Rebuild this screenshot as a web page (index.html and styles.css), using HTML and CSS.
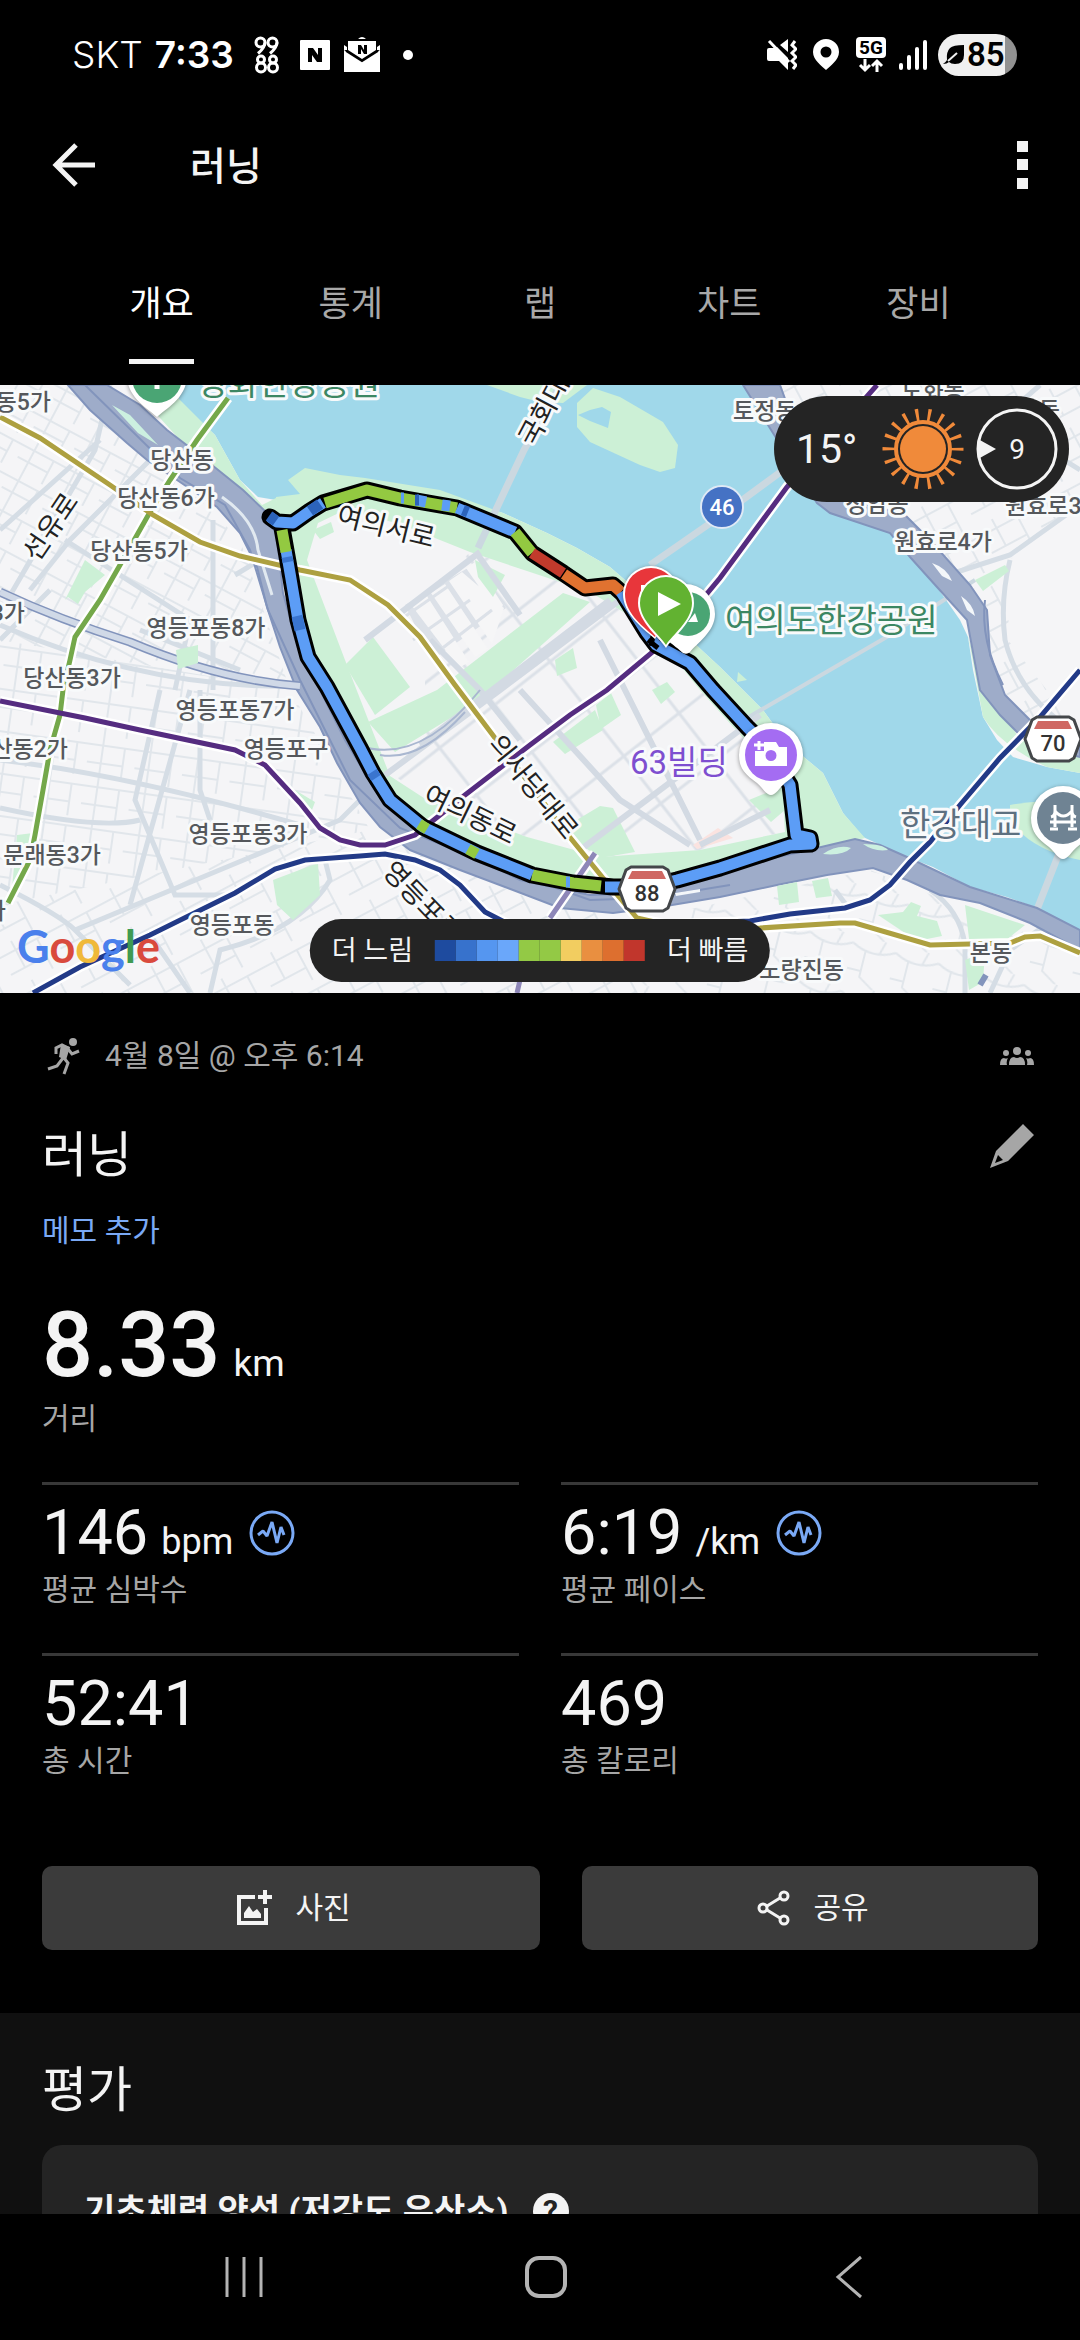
FILE: index.html
```html
<!DOCTYPE html>
<html lang="ko">
<head>
<meta charset="utf-8">
<meta name="viewport" content="width=device-width, initial-scale=1">
<title>러닝</title>
<link rel="stylesheet" href="styles.css">
</head>
<body>
<div class="screen">
  <div class="status">
    <div class="status-side">
      <span class="carrier">SKT</span>
      <span class="clock">7:33</span>
      <svg class="ic-9988" width="26" height="38" viewBox="0 0 26 38" fill="none" stroke="#fff" stroke-width="3"><circle cx="6.500" cy="6.500" r="4.500"/><circle cx="18.500" cy="6.500" r="4.500"/><path d="M11 6.500q0 5-7 11M23 6.500q0 5-7 11"/><circle cx="7" cy="23.500" r="3.500"/><circle cx="7" cy="31.500" r="4.500"/><circle cx="19" cy="23.500" r="3.500"/><circle cx="19" cy="31.500" r="4.500"/></svg>
      <svg class="ic-n" width="32" height="32" viewBox="0 0 32 32"><rect x="1" y="1" width="30" height="30" rx="1" fill="#fff"/><path d="M9 23V9h5l5 7V9h4v14h-5l-5-7v7z" fill="#000"/></svg>
      <svg class="ic-mail" width="36" height="38" viewBox="0 0 36 38"><path d="M14 3q4-4 8 0zM4 5h28v9L18 23 4 14z" fill="#fff"/><path d="M0 14l18 11 18-11v22H0z" fill="#fff"/><path d="M0 14V9l3 2v3zM36 14V9l-3 2v3z" fill="#fff"/><path d="M2 15l16 10 16-10" fill="none" stroke="#000" stroke-width="2"/><path d="M14 18V9h3l3 5V9h3v9h-3l-3-5v5z" fill="#000"/></svg>
      <i class="more-dot"></i>
    </div>
    <div class="status-side">
      <svg width="30" height="32" viewBox="0 0 30 32"><path d="M0 11q0-2 2-2h5l3-1 11 11v12l-9-9H2q-2 0-2-2zM13 6l8-6v13z" fill="#fff"/><path d="M2 2l20 21M28 2l-3 4 4 4-4 4 4 4-4 4 4 4-3 4" fill="none" stroke="#fff" stroke-width="3"/></svg>
      <svg class="ic-pin" width="26" height="32" viewBox="0 0 26 32"><path fill-rule="evenodd" d="M13 0a13 13 0 0 1 13 13c0 8-9 14-13 18C9 27 0 21 0 13A13 13 0 0 1 13 0zm0 7.500a5.500 5.500 0 1 0 0 11 5.500 5.500 0 0 0 0-11z" fill="#fff"/></svg>
      <svg class="ic-5g" width="32" height="36" viewBox="0 0 32 36"><rect x="1" y="0" width="30" height="21" rx="4" fill="#fff"/><text x="16" y="17" text-anchor="middle" class="t-5g">5G</text><path d="M10 22v11M5 28l5 5 5-5M22 35V24M17 29l5-5 5 5" fill="none" stroke="#fff" stroke-width="3"/></svg>
      <svg class="ic-sig" width="28" height="30" viewBox="0 0 28 30" stroke="#fff" stroke-width="4" stroke-linecap="round"><path d="M2 25v3M10 17v11M18 9v19M26 2v26"/></svg>
      <span class="battery"><svg width="22" height="22" viewBox="0 0 22 22"><path d="M21 1v10q0 9-9 9-4 0-6-2-2 2-6 2 3-2 4-4-1-8 3-12 3-3 14-3z" fill="#000"/><path d="M5 17l9-8" stroke="#f0f0f0" stroke-width="2"/></svg>85</span>
    </div>
  </div>

  <header class="appbar">
    <button class="icon-btn" aria-label="뒤로"><svg width="44" height="44" viewBox="0 0 44 44" fill="none" stroke="#f4f4f4" stroke-width="5"><path d="M43 22H4M24 2L4 22l20 20"/></svg></button>
    <h1>러닝</h1>
    <button class="icon-btn" aria-label="더보기"><svg width="12" height="48" viewBox="0 0 12 48" fill="#f4f4f4"><path d="M0 0h11v11H0zM0 18h11v11H0zM0 37h11v11H0z"/></svg></button>
  </header>

  <nav class="tabs">
    <button class="tab on"><span>개요</span></button>
    <button class="tab"><span>통계</span></button>
    <button class="tab"><span>랩</span></button>
    <button class="tab"><span>차트</span></button>
    <button class="tab"><span>장비</span></button>
  </nav>

  <main class="content">
    <section class="map">
      <svg class="map-art" viewBox="0 385 1080 608">
        <defs>
          <pattern id="gA" width="46" height="34" patternUnits="userSpaceOnUse" patternTransform="rotate(28)"><path d="M0 8H46M0 21H34M12 0V34M34 8V34" class="street"/></pattern>
          <pattern id="gB" width="48" height="42" patternUnits="userSpaceOnUse" patternTransform="rotate(8)"><path d="M0 10H48M14 0V42M0 28H36M36 10V42" class="street"/></pattern>
          <pattern id="gC" width="56" height="44" patternUnits="userSpaceOnUse" patternTransform="rotate(-28)"><path d="M0 10H56M0 30H40M16 0V30M40 10V44" class="street"/></pattern>
          <pattern id="gD" width="70" height="60" patternUnits="userSpaceOnUse" patternTransform="rotate(-38)"><path d="M0 20H70M26 0V60" class="block"/></pattern>
          <pattern id="gE" width="44" height="50" patternUnits="userSpaceOnUse" patternTransform="rotate(14)"><path d="M0 8Q22 20 44 8M14 12V40L30 50M32 0L28 14M0 34H14" class="street"/></pattern>
        </defs>
        <rect x="0" y="385" width="1080" height="608" fill="#f5f5f7"/>

        <!-- street grids by district -->
        <path d="M0 385H85L240 540 290 690 0 640z" fill="url(#gA)"/>
        <path d="M0 640L290 690 370 830 0 905z" fill="url(#gB)"/>
        <path d="M0 905L370 830 520 895 640 920V993H0z" fill="url(#gC)"/>
        <path d="M640 920L870 870 1080 955V993H640z" fill="url(#gE)"/>
        <path d="M745 385H1080V500L1010 560 960 600z" fill="url(#gC)"/>
        <path d="M975 600L1010 570 1008 640 1070 720H1030L1000 690z" fill="url(#gC)"/>
        <g class="road">
          <path d="M110 385L95 450 12 592M0 625Q150 690 300 686M30 590L70 540 170 440 75 385M0 530L100 440M65 540L190 620 175 690M213 520V690M190 690L130 905M0 760Q130 775 300 825M0 808Q100 830 140 820M160 690L135 800 175 895 235 895M0 885Q60 915 75 930L340 820 380 780M75 930L130 985M150 935L190 993M325 860L330 880Q300 930 220 950L210 993M200 690V790L210 820"/>
          <path d="M140 630L240 670M0 640L50 590M235 575L260 560"/>
          <path d="M870 600L1010 555 1080 505M1010 560Q1000 600 1005 640 1020 700 1080 735M1040 385L1000 420 1080 470M905 520L960 600"/>
          <path d="M835 890L850 910M930 890Q960 910 965 945V993M1060 915L1010 950 990 993"/>
        </g>

        <!-- river -->
        <path d="M185 385L178 400 215 435 240 480 258 497 276 500 300 500 360 480 430 490 503 513 547 533 577 548 610 567 640 593 720 667 763 710 787 743 823 773 843 813 863 837 907 857 933 867 970 887 1007 897 1037 908 1080 930V773L1047 767 1013 757 997 740 983 717 973 670 968 637 960 620 937 587 910 557 890 533 830 513 817 503 773 433 743 385z" fill="#a0d8ea"/>
        <g fill="#ccf0d6">
          <path d="M140 385H165L195 415 215 435 240 480 262 505 276 498 290 560 255 500 180 440 130 385z"/>
          <path d="M276 500V497L300 494 288 480 305 468 340 475 365 478 440 490 503 513 547 533 577 548 610 567 640 593 720 667 763 710 787 743 823 773 843 813 865 838 800 855 640 893 520 880 420 830 375 790 327 700 297 620 280 520z"/>
          <path d="M577 403L593 388 620 397 663 422 678 445 675 468 660 472 640 465 590 442 577 427z"/>
          <path d="M487 385L520 397 540 402 563 403 587 385z"/>
          <path d="M968 635Q978 690 983 717 1000 745 1047 767L1080 773V745L1020 740 990 690 972 650z"/>
          <path d="M1010 805Q1040 800 1080 800V860Q1030 850 1010 820z"/>
          <path d="M738 672l9 8-10 2z"/>
        </g>
        <path d="M590 410L602 407 611 412 608 428 590 421 578 415z" fill="#a0d8ea"/>

        <!-- bridges -->
        <g fill="none" stroke="#cbd8e0" stroke-width="7"><path d="M478 548L524 450 560 385M650 565L722 515 790 465M1080 800L1036 912" /></g>
        <path d="M735 725L885 638 975 580" fill="none" stroke="#cbd8e0" stroke-width="4"/>

        <!-- island blocks -->
        <path d="M307 560L318 523 345 510 400 524 470 552 530 572 590 592 650 628 700 690 745 740 783 800 785 832 700 850 600 857 527 837 427 800 390 776 345 660z" fill="#f4f4f6"/>
        <path d="M425 600L470 552 530 572 590 592 650 628 700 690 745 740 783 800 785 832 700 850 600 857 527 837 427 800 395 776 425 740z" fill="url(#gD)"/>
        <path d="M478 562L506 608 432 660 405 605z" fill="#dce1e8"/>
        <path d="M412 606l15-10 42 66-10 6zM431 593l14-9 43 65-13 8zM449 581l13-9 42 36-12 36zM466 568l9-6 28 43-5 9z" fill="#f6f6f7"/>
        <path d="M413 640L470 600M400 620L450 585M440 650L492 610" stroke="#dce1e8" stroke-width="3"/>
        <g fill="#ccf0d6">
          <path d="M368 722L437 690 563 593 590 602 480 700 395 752z"/>
          <path d="M345 665L373 637 410 687 375 715z"/>
          <path d="M313 530l18-8 3 10-14 7zM475 560l30 15-12 22-15-20z"/>
          <path d="M553 742l42-32 8 20-38 24zM596 705l15-12 10 22-20 14zM555 660l18-12 4 20-20 8z"/>
          <path d="M560 830L600 806 613 808 635 852 600 858zM749 800l34-14 2 24-14 12z"/>
          <path d="M652 690l15-8 8 10-14 12z"/>
        </g>
        <path d="M693 845L718 828 733 838 697 849z" fill="#fbe3e0"/>
        <g class="artery"><path d="M365 640L480 552M478 555L520 615M420 745L610 600M520 740L480 690 430 640M600 640L700 840M520 690L620 800 690 845M580 850L760 715M385 775L500 690 620 600M700 845L770 810"/></g>

        <!-- expressways -->
        <g fill="#9eacc9" stroke="#8294bc" stroke-width="2">
          <path d="M68 385L90 410 127 443 147 460 177 480 217 507 240 533 257 567 267 607 280 647 297 690 320 727 337 763 360 803 380 827 410 850 460 870 513 890 560 908 613 913 660 907 720 897 777 885 827 875 873 868 907 880 940 895 980 903 1030 923 1080 950V930L1037 908 970 887 907 857 880 845 855 839 800 852 720 870 640 893 590 895 520 880 420 830 375 790 345 740 320 690 297 643 283 593 277 537 267 513 243 490 197 453 167 430 140 405 107 385z"/>
          <path d="M743 385L773 433 817 503 830 513 890 533 910 557 937 587 967 620 980 690 1000 715 1030 745 1080 757V735L1035 725 1005 695 990 655 987 610 970 585 930 540 905 515 850 500 800 440 780 385z"/>
        </g>
        <path d="M1003 685Q980 640 985 600" fill="none" stroke="#8294bc" stroke-width="2"/>
        <path d="M0 592Q60 620 130 642 220 680 300 686" fill="none" stroke="#8294bc" stroke-width="9"/>
        <path d="M0 592Q60 620 130 642 220 680 300 686" fill="none" stroke="#d0d9e7" stroke-width="6"/>
        <path d="M85 385L180 478 225 505 250 550 268 610 300 680 350 780 400 828 500 868 590 900 650 898 730 885" fill="none" stroke="#8294bc" stroke-width="2"/>
        <path d="M222 497Q255 520 258 550L272 595" fill="none" stroke="#e1e9f0" stroke-width="3"/>
        <g fill="#ccf0e0"><path d="M112 405l18 10 28 30-20-12zM823 854q15-10 28-6-8 8-28 6zM863 844q20 0 25 6-14 2-25-6z"/></g>
        <g fill="#f4f7fa"><path d="M932 563q15 5 20 18l-10-5zM961 596q12 8 14 20l-8-6zM675 893l25-4v3l-24 4z"/></g>
        <path d="M360 746Q420 765 480 690M380 755Q420 762 465 712" fill="none" stroke="#a9b7d0" stroke-width="2"/>

        <!-- southern and northern parks -->
        <g fill="#ccf0d6">
          <path d="M273 880L318 863 320 895 293 920 277 905z"/>
          <path d="M65 600L85 560 105 575 85 592 78 604 68 597zM176 650l22-5v18l-20 6zM17 835l16-2-15 45-6 10zM295 790l20 12-3 8-18-12z"/>
          <path d="M777 886l20-4 2 20-20 3zM812 881l16-3 4 18-16 2zM878 915l25-3 8-10 10 4-4 10 20 5 5 15-25 5zM965 905l60 20-25 20-30 2zM965 960l20-8-2 30-14 8zM975 580l30-15 4 6-26 20z"/>
        </g>
        <path d="M980 985l6-10" stroke="#8294bc" stroke-width="6"/>

        <!-- transit lines -->
        <g class="casing">
          <path d="M228 398L197 440 170 480 150 512 137 535 120 565 100 600 75 637 70 660 63 690 60 715 50 750 43 790 35 835 30 860 8 903"/>
          <path d="M0 417L40 438 110 485 153 515 200 542 240 556 300 570 350 580 388 605 420 637 455 685 495 738 568 835 603 878 637 918 690 930 760 928 840 923 855 923 930 945 1010 943 1025 937 1040 936 1080 953"/>
          <path d="M0 701L85 718 140 730 235 750 265 765 300 803 320 828 340 840 360 845 385 845 415 835 440 815 465 795 500 768 530 745 570 715 607 690 655 650 685 620 720 578 787 487 877 385"/>
          <path d="M33 993L80 967 150 935 235 893 275 869 305 860 360 856 385 854 415 860 440 870 460 885 485 912 520 930 750 921 790 914 845 908 870 900 890 885 910 862 930 842 960 805 1000 758 1040 717 1080 670"/>
          <path d="M595 853L550 918"/>
        </g>
        <g class="line">
          <path stroke="#74a84a" d="M228 398L197 440 170 480 150 512 137 535 120 565 100 600 75 637 70 660 63 690 60 715 50 750 43 790 35 835 30 860 8 903"/>
          <path stroke="#ada040" d="M0 417L40 438 110 485 153 515 200 542 240 556 300 570 350 580 388 605 420 637 455 685 495 738 568 835 603 878 637 918 690 930 760 928 840 923 855 923 930 945 1010 943 1025 937 1040 936 1080 953"/>
          <path stroke="#552c80" d="M0 701L85 718 140 730 235 750 265 765 300 803 320 828 340 840 360 845 385 845 415 835 440 815 465 795 500 768 530 745 570 715 607 690 655 650 685 620 720 578 787 487 877 385"/>
          <path stroke="#223a87" d="M33 993L80 967 150 935 235 893 275 869 305 860 360 856 385 854 415 860 440 870 460 885 485 912 520 930 750 921 790 914 845 908 870 900 890 885 910 862 930 842 960 805 1000 758 1040 717 1080 670"/>
          <path stroke="#8e87b8" d="M595 853L550 918M523 967L517 993"/>
        </g>

        <!-- run route, coloured by pace -->
        <path class="route-edge" d="M270 517L277 522 293 523 310 511 323 503 367 490 400 498 457 508 515 532 532 553 563 573 585 588 613 585 623 594 647 633 656 645 690 663 713 690 747 727 765 745 790 785 796 835 810 838 811 844 790 845 720 868 677 880 647 887 613 887 573 883 532 875 477 853 423 827 390 800 373 773 360 748 327 687 308 657 298 620 290 573 282 528"/>
        <g class="route">
          <path stroke="#5c9df6" d="M270 517L277 522 293 523 310 511 323 503"/>
          <path stroke="#2c63bb" d="M269 516L276 521M310 511L320 504"/>
          <path stroke="#93c941" d="M325 503L367 490 400 498 457 508"/>
          <path stroke="#5c9df6" d="M416 500L426 502M442 505L450 506M457 508L515 532M401 498h3"/>
          <path stroke="#2c63bb" d="M415 500h4M463 510l5 2"/>
          <path stroke="#93c941" d="M515 532L532 553"/>
          <path stroke="#c23a2c" d="M532 553L563 573"/>
          <path stroke="#e07230" d="M564 574L585 588 613 585 621 592"/>
          <path stroke="#5c9df6" d="M621 592L647 633 656 645 690 663 713 690 747 727 765 745 790 785 796 835 810 838 811 844 790 845 720 868 677 880 647 887 605 887"/>
          <path stroke="#93c941" d="M601 886L573 883 532 875"/>
          <path stroke="#5c9df6" d="M570 882h-4M532 875L477 853 423 827 390 800 373 773 360 748 327 687 308 657 298 620 290 573 286 550"/>
          <path stroke="#93c941" d="M477 854L468 849M427 829L419 824M286 552L282 530"/>
          <path stroke="#3a75cf" d="M376 778l-4-6M300 630l-3-14M287 557l1 5"/>
        </g>
        <path d="M648 640l10 8M653 636l-2 10" stroke="#000" stroke-width="5"/>

        <!-- road numbers -->
        <circle cx="722" cy="507" r="21" fill="#4572c4" stroke="#dfe9f5" stroke-width="2"/>
        <text class="num" x="722" y="515" fill="#fff">46</text>
        <path class="shield" d="M631 867H663L668 870 675 889 668 908 663 911H631L626 908 619 889 626 870z"/>
        <path d="M632 871H662L666 879H628z" fill="#cf6863"/>
        <text class="num" x="647" y="901" fill="#333">88</text>
        <path class="shield" d="M1037 717H1069L1074 720 1081 739 1074 758 1069 761H1037L1032 758 1025 739 1032 720z"/>
        <path d="M1038 721H1068L1072 729H1034z" fill="#cf6863"/>
        <text class="num" x="1053" y="751" fill="#333">70</text>

        <!-- place names -->
        <g class="dong">
          <text x="182" y="468">당산동</text>
          <text x="166" y="506">당산동6가</text>
          <text x="139" y="559">당산동5가</text>
          <text x="206" y="636">영등포동8가</text>
          <text x="72" y="686">당산동3가</text>
          <text x="235" y="718">영등포동7가</text>
          <text x="286" y="757">영등포구</text>
          <text x="248" y="842">영등포동3가</text>
          <text x="232" y="933">영등포동</text>
          <text x="991" y="961">본동</text>
          <text x="933" y="399">도화동</text>
          <text x="877" y="512">청암동</text>
          <text x="943" y="550">원효로4가</text>
        </g>
        <g class="dong end">
          <text x="51" y="410">양평동5가</text>
          <text x="25" y="621">양평동3가</text>
          <text x="68" y="757">당산동2가</text>
          <text x="101" y="863">문래동3가</text>
          <text x="6" y="919">가</text>
          <text x="844" y="978">노량진동</text>
          <text x="1060" y="418">용문동</text>
        </g>
        <g class="dong start">
          <text x="733" y="419">토정동</text>
          <text x="1005" y="514">원효로3가</text>
        </g>
        <g class="way">
          <text transform="translate(51 527) rotate(-56)" y="9">선유로</text>
          <text transform="translate(386 527) rotate(14)" y="9">여의서로</text>
          <text transform="translate(470 815) rotate(26)" y="9">여의동로</text>
          <text transform="translate(533 787) rotate(51)" y="9">의사당대로</text>
          <text transform="translate(422 902) rotate(46)" y="9">영등포로</text>
          <text transform="translate(550 400) rotate(-62)" y="9">국회대로</text>
        </g>
        <g class="poi">
          <text x="198" y="395" fill="#3c8763">양화한강공원</text>
          <text x="725" y="632" fill="#3c8763">여의도한강공원</text>
          <text x="630" y="774" fill="#7e4fd0">63빌딩</text>
          <text x="900" y="836" fill="#5d7080">한강대교</text>
        </g>

        <!-- pins -->
        <g class="pin">
          <path fill="#fff" d="M157 417C150 410 127 398 127 376H187C187 398 164 410 157 417z"/><circle cx="157" cy="378" r="25" fill="#4aa574"/><path d="M157 380v9" stroke="#fff" stroke-width="5"/>
          <path fill="#fff" d="M683 653C676 646 655 635 655 614A30 30 0 0 1 715 614C715 632 696 644 690 652Q687 655 683 653z"/><circle cx="688" cy="614" r="22" fill="#4aa574"/><path d="M688 622l7-9 3 9z" fill="#fff"/>
          <path fill="#fff" d="M655 639C640 626 623 613 623 594A28 28 0 0 1 679 594z"/><path fill="#e8363b" d="M655 637C640 624 625 612 625 594A26 26 0 0 1 677 594z"/><path d="M641 585h6v6h-6z" fill="#fff"/>
          <path fill="#fff" d="M666 648C660 638 638 622 638 603A28 28 0 0 1 694 603C694 622 672 638 666 648z"/><path fill="#62b231" d="M666 645C660 635 640 621 640 603A26 26 0 0 1 692 603C692 621 672 635 666 645z"/><path d="M658 592L681 604 658 616z" fill="#fff"/>
          <path fill="#fff" d="M771 795C766 795 763 788 757 783 746 775 739 769 739 755A32 32 0 0 1 803 755C803 769 796 775 785 783 779 788 776 795 771 795z"/><circle cx="771" cy="755" r="26" fill="#a46cf2"/>
          <path fill="#fff" fill-rule="evenodd" d="M755 766V751H764V742H776L779 747H787V766zM771 750a5.500 5.500 0 1 0 0 11 5.500 5.500 0 0 0 0-11z"/><path d="M759 741v9M754 745h10" stroke="#fff" stroke-width="3"/>
          <path fill="#fff" d="M1063 859C1058 859 1055 852 1049 847 1038 839 1031 832 1031 818A32 32 0 0 1 1095 818C1095 832 1088 839 1077 847 1071 852 1068 859 1063 859z"/><circle cx="1063" cy="818" r="26" fill="#6f8393"/>
          <path d="M1055 805v22M1072 805v22M1050 822h26M1050 829h8M1068 829h9M1051 817q4-1 4-6 8 10 17 0 0 5 4 6" fill="none" stroke="#fff" stroke-width="3"/>
        </g>
        <text class="google" x="17" y="963"><tspan fill="#4a80ec">G</tspan><tspan fill="#d94a3d">o</tspan><tspan fill="#f0b93a">o</tspan><tspan fill="#4a80ec">g</tspan><tspan fill="#3f9a52">l</tspan><tspan fill="#d94a3d">e</tspan></text>
      </svg>

      <div class="weather">
        <span class="temp">15°</span>
        <svg width="82" height="82" viewBox="-41 -41 82 82"><circle r="23" fill="#f08a3a"/><circle r="27" fill="none" stroke="#f08a3a" stroke-width="4"/><circle r="34" fill="none" stroke="#f08a3a" stroke-width="13" stroke-dasharray="3 8.868" stroke-dashoffset="1.500"/></svg>
        <svg width="82" height="82" viewBox="-41 -41 82 82"><circle r="39" fill="none" stroke="#f4f4f4" stroke-width="3"/><path d="M-39-10L-21 0-39 10z" fill="#f4f4f4"/><text class="wind" y="10">9</text></svg>
      </div>

      <div class="legend">
        <span>더 느림</span>
        <div class="scale"><i class="c1"></i><i class="c2"></i><i class="c3"></i><i class="c4"></i><i class="c5"></i><i class="c5"></i><i class="c6"></i><i class="c7"></i><i class="c8"></i><i class="c9"></i></div>
        <span>더 빠름</span>
      </div>
    </section>

    <section class="summary">
      <div class="meta">
        <svg width="38" height="38" viewBox="0 0 38 38"><circle cx="31" cy="5" r="4" fill="#a6a6a6"/><path d="M14 17V11L20 8L26 11L22 21L26 26L22 37M21 21L15 29L6 32M26 12L30 17L37 14" fill="none" stroke="#a6a6a6" stroke-width="3"/><path d="M19 7L28 10L24 23L17 20z" fill="#a6a6a6"/></svg>
        <span>4월 8일 @ 오후 6:14</span>
        <svg class="people" width="34" height="20" viewBox="0 0 34 20" fill="#a6a6a6"><circle cx="17" cy="5" r="4"/><circle cx="6" cy="7" r="3"/><circle cx="28" cy="7" r="3"/><path d="M9 19q0-8 5-8 3 2 6 0 5 0 5 8zM0 19q0-7 4-7 2 1 4 0-2 3-1 7zM34 19q0-7-4-7-2 1-4 0 2 3 1 7z"/></svg>
      </div>
      <div class="title-row">
        <h2>러닝</h2>
        <button class="icon-btn" aria-label="이름 편집"><svg width="44" height="44" viewBox="0 0 44 44"><path fill-rule="evenodd" d="M33 0L44 11 18 37 0 44 6 27zM8 31L5 39 13 36z" fill="#a6a6a6"/></svg></button>
      </div>
      <a class="memo" href="#">메모 추가</a>

      <div class="distance"><b>8.33</b><span>km</span></div>
      <p class="label">거리</p>

      <div class="stats">
        <div class="stat">
          <div class="value">146 <small>bpm</small><svg width="46" height="46" viewBox="0 0 46 46" fill="none" stroke="#7aa9f5" stroke-width="3"><circle cx="23" cy="23" r="21"/><path d="M9 25l5-4 4 5 5-14 5 21 4-16 3 8" stroke-linejoin="bevel"/></svg></div>
          <p class="label">평균 심박수</p>
        </div>
        <div class="stat">
          <div class="value">6:19 <small>/km</small><svg width="46" height="46" viewBox="0 0 46 46" fill="none" stroke="#7aa9f5" stroke-width="3"><circle cx="23" cy="23" r="21"/><path d="M9 25l5-4 4 5 5-14 5 21 4-16 3 8" stroke-linejoin="bevel"/></svg></div>
          <p class="label">평균 페이스</p>
        </div>
        <div class="stat">
          <div class="value">52:41</div>
          <p class="label">총 시간</p>
        </div>
        <div class="stat">
          <div class="value">469</div>
          <p class="label">총 칼로리</p>
        </div>
      </div>

      <div class="actions">
        <button class="action"><svg width="36" height="36" viewBox="0 0 36 36"><path d="M18 7H2V33H29V18M28 0V14M21 7H35" fill="none" stroke="#f4f4f4" stroke-width="4"/><path d="M7 28V23L12 16 16 22 20 19 24 24V28z" fill="#f4f4f4"/></svg>사진</button>
        <button class="action"><svg width="34" height="36" viewBox="0 0 34 36" fill="none" stroke="#f4f4f4" stroke-width="3"><circle cx="6" cy="18" r="4"/><circle cx="27" cy="6" r="4"/><circle cx="27" cy="30" r="4"/><path d="M10 16L23 8M10 20L23 28"/></svg>공유</button>
      </div>
    </section>

    <section class="rating">
      <h2>평가</h2>
      <div class="card">
        <h3>기초체력 양성 (저강도 유산소)</h3>
        <button class="help" aria-label="도움말">?</button>
      </div>
    </section>
  </main>

  <footer class="sysnav">
    <button aria-label="최근 앱"><svg width="42" height="44" viewBox="0 0 42 44" stroke="#b4b4b4" stroke-width="3"><path d="M4 2V42M21 2V42M38 2V42"/></svg></button>
    <button aria-label="홈"><svg width="44" height="44" viewBox="0 0 44 44"><rect x="3" y="3" width="38" height="38" rx="12" fill="none" stroke="#b4b4b4" stroke-width="4"/></svg></button>
    <button aria-label="뒤로"><svg width="28" height="44" viewBox="0 0 28 44" fill="none" stroke="#b4b4b4" stroke-width="3"><path d="M26 2L3 22 26 42"/></svg></button>
  </footer>
</div>
</body>
</html>
```
FILE: styles.css
```css
* { box-sizing: border-box; margin: 0; padding: 0; }
body { background: #000; color: #f4f4f4; font-family: Roboto, "Noto Sans CJK KR", sans-serif; }
button { background: none; border: 0; color: inherit; font: inherit; }
svg { display: block; flex: none; }

.screen { height: 100vh; display: flex; flex-direction: column; overflow: hidden; }

/* system status bar */
.status { flex: none; height: 110px; padding: 0 63px 0 72px; display: flex; align-items: center; justify-content: space-between; color: #fff; }
.status-side { display: flex; align-items: center; }
.carrier, .clock { font-family: Inter, sans-serif; font-size: 37px; line-height: 48px; font-weight: 300; }
.clock { font-weight: 600; margin: 0 20px 0 12px; }
.ic-n { margin: 0 13px 0 19px; }
.more-dot { width: 10px; height: 10px; border-radius: 50%; background: #fff; margin-left: 23px; }
.ic-pin { margin: 0 16px; }
.ic-sig { margin: 0 11px 0 12px; }
.t-5g { font: 700 19px Roboto, sans-serif; fill: #000; }
.battery { width: 79px; height: 42px; border-radius: 21px; padding-left: 5px; display: flex; align-items: center; gap: 2px; background: linear-gradient(90deg, #f0f0f0 67px, #929292 67px); color: #000; font: 600 33px/42px Roboto, sans-serif; }

/* app bar */
.appbar { flex: none; height: 110px; padding: 0 51px 0 52px; display: flex; align-items: center; gap: 94px; }
.appbar h1 { flex: 1; padding-top: 4px; font-size: 39px; line-height: 56px; font-weight: 500; }

.tabs { flex: none; height: 165px; padding: 0 67px 21px; display: flex; }
.tab { flex: 1; display: flex; justify-content: center; color: #a8a8a8; font-size: 35px; line-height: 48px; }
.tab span { height: 144px; padding-top: 61px; border-bottom: 5px solid transparent; }
.tab.on { color: #fff; }
.tab.on span { border-color: #f4f4f4; }

.content { flex: 1; min-height: 0; overflow-y: auto; scrollbar-width: none; }

/* map */
.map { position: relative; background: #f5f5f7; }
.map-art { width: 100%; height: auto; }
.street { fill: none; stroke: #e1e6eb; stroke-width: 2; }
.block { fill: none; stroke: #dce1e8; stroke-width: 3; }
.road { fill: none; stroke: #d5dde5; stroke-width: 5; }
.artery { fill: none; stroke: #d3dae3; stroke-width: 6; }
.casing { fill: none; stroke: #fff; stroke-width: 10; }
.line { fill: none; stroke-width: 5; }
.route-edge { fill: none; stroke: #000; stroke-width: 17; stroke-linejoin: round; stroke-linecap: round; }
.route { fill: none; stroke-width: 11; stroke-linejoin: round; }
.shield { fill: #fff; stroke: #44474a; stroke-width: 3; stroke-linejoin: round; }
.map-art text { font-family: Roboto, "Noto Sans CJK KR", sans-serif; }
.map-art .num { font-size: 22px; font-weight: 500; text-anchor: middle; }
.dong, .way, .poi { paint-order: stroke; stroke: #f8fafb; stroke-width: 6px; stroke-linejoin: round; }
.dong { font-size: 23px; font-weight: 500; fill: #55585c; text-anchor: middle; }
.dong.end { text-anchor: end; }
.dong.start { text-anchor: start; }
.way { font-size: 27px; fill: #222; text-anchor: middle; }
.poi { font-size: 33px; }
.pin { filter: drop-shadow(0 1px 2px rgba(0, 0, 0, .4)); }
.map-art .google { font-family: Lato, sans-serif; font-size: 45px; font-weight: 700; }

.weather { position: absolute; top: 11px; right: 11px; height: 106px; padding: 0 11px 0 22px; display: flex; align-items: center; gap: 12px; border-radius: 53px; background: #242424; }
.temp { font-size: 41px; line-height: 48px; width: 74px; }
.wind { font-size: 28px; fill: #f4f4f4; text-anchor: middle; }
.legend { position: absolute; bottom: 11px; left: 50%; transform: translateX(-50%); height: 63px; padding: 0 22px; display: flex; align-items: center; gap: 22px; border-radius: 32px; background: #242424; font-size: 27px; line-height: 40px; white-space: nowrap; }
.scale { display: flex; }
.scale i { width: 21px; height: 21px; }
.c1 { background: #1e4b9f; }
.c2 { background: #3772cc; }
.c3 { background: #5596f0; }
.c4 { background: #6aa7fa; }
.c5 { background: #93c945; }
.c6 { background: #f2cd60; }
.c7 { background: #e98f40; }
.c8 { background: #dd6f2f; }
.c9 { background: #c1362c; }

/* activity summary */
.summary { padding: 43px 42px 63px; }
.meta { display: flex; align-items: center; color: #a6a6a6; font-size: 30px; line-height: 40px; }
.meta span { flex: 1; margin-left: 25px; }
.people { margin-right: 4px; }
.title-row { margin-top: 48px; padding-right: 4px; display: flex; align-items: flex-start; justify-content: space-between; }
h2 { padding-top: 2px; font-size: 49px; line-height: 60px; font-weight: 400; }
.memo { display: block; margin-top: 25px; font-size: 30px; line-height: 40px; color: #7aa9f5; text-decoration: none; }
.distance { margin-top: 45px; display: flex; align-items: baseline; gap: 13px; font-size: 37px; line-height: 40px; }
.distance b { font-size: 90px; line-height: 100px; font-weight: 500; }
.label { font-size: 30px; line-height: 40px; color: #a6a6a6; }
.distance + .label { margin-top: 3px; }
.stats { margin-top: 43px; display: grid; grid-template-columns: 1fr 1fr; gap: 43px 42px; }
.stat { border-top: 3px solid #383838; padding-top: 12px; }
.value { display: flex; align-items: baseline; gap: 13px; font-size: 63px; line-height: 72px; margin-bottom: 1px; }
.value small { font-size: 36px; line-height: 40px; }
.value svg { align-self: center; margin-left: 3px; }
.actions { margin-top: 85px; display: grid; grid-template-columns: 498fr 456fr; gap: 42px; }
.action { height: 84px; padding-left: 6px; display: flex; align-items: center; justify-content: center; gap: 22px; border-radius: 10px; background: #3b3b3b; font-size: 30px; line-height: 40px; }

/* rating */
.rating { background: #101010; padding: 46px 42px 42px; }
.card { margin-top: 24px; padding: 44px 42px; display: flex; align-items: center; gap: 24px; border-radius: 20px; background: #242424; }
.card h3 { font-size: 34px; line-height: 44px; font-weight: 700; }
.help { width: 36px; height: 36px; border-radius: 50%; background: #f4f4f4; color: #242424; font-size: 30px; line-height: 36px; font-weight: 700; }

/* system navigation */
.sysnav { flex: none; height: 126px; padding: 0 80px 0 93px; display: flex; background: #000; }
.sysnav button { flex: 1; display: flex; align-items: center; justify-content: center; }
```
